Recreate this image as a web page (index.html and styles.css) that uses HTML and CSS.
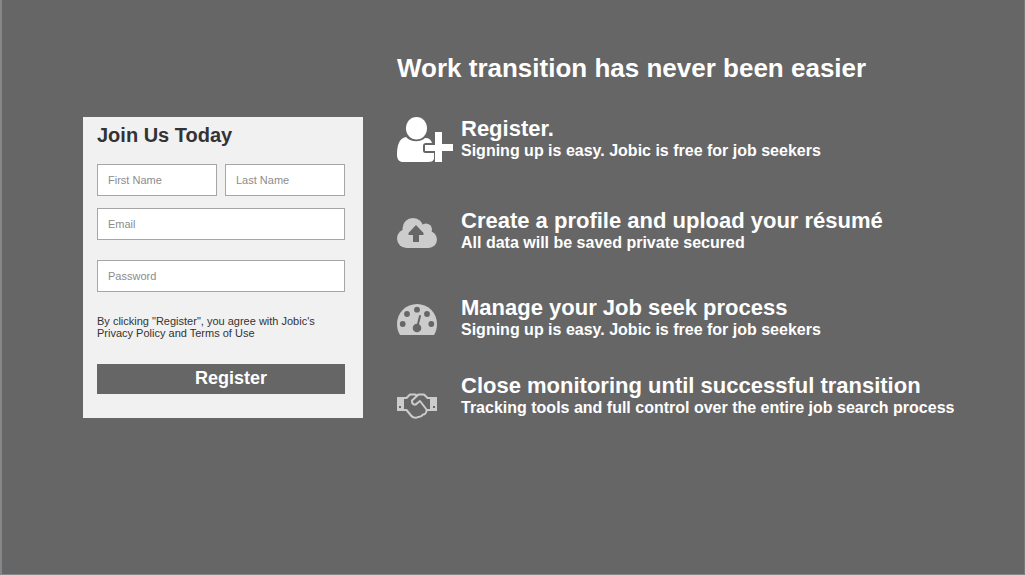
FILE: index.html
```html
<!DOCTYPE html>
<html lang="en">
<head>
<meta charset="utf-8">
<meta name="viewport" content="width=device-width, initial-scale=1">
<title>Join Jobic</title>
<link rel="stylesheet" href="styles.css">
</head>
<body>
<main class="page">
  <form class="signup">
    <h2 class="signup-title">Join Us Today</h2>
    <div class="name-row">
      <input class="field" type="text" placeholder="First Name" aria-label="First Name">
      <input class="field" type="text" placeholder="Last Name" aria-label="Last Name">
    </div>
    <input class="field email" type="email" placeholder="Email" aria-label="Email">
    <input class="field password" type="password" placeholder="Password" aria-label="Password">
    <p class="terms">By clicking "Register", you agree with Jobic's Privacy Policy and Terms of Use</p>
    <button class="submit" type="submit">Register</button>
  </form>
  <section class="intro">
    <h1 class="intro-title">Work transition has never been easier</h1>
    <ul class="steps">
      <li class="step">
        <div class="step-icon">
          <svg class="icon-user" width="56" height="45" viewBox="0 0 56 45" aria-hidden="true">
            <ellipse cx="19.5" cy="11.3" rx="10.5" ry="11.3"/>
            <path d="M9 20C2 21 0 29 0 38C0 42.500 2.500 45 6 45H31C34 45 36 44.400 37 42V36H28.500Q26 36 26 33.500V29Q26 26 29 26H35C34 22 31 20.600 28 21C23 25.500 14 25.500 9 20Z"/>
            <path d="M38 15H45V27H56V34H45V45H38V34H28V28H38Z"/>
          </svg>
        </div>
        <div>
          <h3 class="step-title">Register.</h3>
          <p class="step-text">Signing up is easy. Jobic is free for job seekers</p>
        </div>
      </li>
      <li class="step step-upload">
        <div class="step-icon">
          <svg class="icon-muted" width="40" height="31" viewBox="0 0 40 31" aria-hidden="true">
            <circle cx="9.500" cy="21.500" r="9.500"/>
            <circle cx="16" cy="11.500" r="10.500"/>
            <circle cx="29" cy="12.500" r="6"/>
            <circle cx="31.500" cy="22.500" r="8.500"/>
            <rect x="9.500" y="12" width="22" height="19"/>
            <path class="icon-arrow" d="M19 8L11.500 16V18H16V25H22V18H26.500V16Z"/>
          </svg>
        </div>
        <div>
          <h3 class="step-title">Create a profile and upload your résumé</h3>
          <p class="step-text">All data will be saved private secured</p>
        </div>
      </li>
      <li class="step step-manage">
        <div class="step-icon">
          <svg class="icon-muted" width="40" height="31" viewBox="0 0 40 31" aria-hidden="true">
            <path d="M3 31C1 28 0 24 0 20A20 20 0 0 1 40 20C40 24 39 28 37 31Z"/>
            <g class="icon-cut">
              <circle cx="5.700" cy="20" r="2.900"/>
              <circle cx="10" cy="10" r="2.900"/>
              <circle cx="20" cy="5.700" r="2.900"/>
              <circle cx="30" cy="10" r="2.900"/>
              <circle cx="34.300" cy="20" r="2.900"/>
              <circle cx="20" cy="24" r="4.300"/>
            </g>
            <path class="icon-needle" d="M20 24L23 12"/>
          </svg>
        </div>
        <div>
          <h3 class="step-title">Manage your Job seek process</h3>
          <p class="step-text">Signing up is easy. Jobic is free for job seekers</p>
        </div>
      </li>
      <li class="step step-monitor">
        <div class="step-icon">
          <svg class="icon-muted" width="40" height="26" viewBox="0 0 40 26" aria-hidden="true">
            <path fill-rule="evenodd" d="M0 4H7V18H0ZM2 13V15H4V13Z"/>
            <path fill-rule="evenodd" d="M33 4H40V18H33ZM36 13V15H38V13Z"/>
            <path class="icon-line" d="M7 5H9.500L13 1.500H18L20 2.500M7 17H9.500L14 22.500C16 25 19 25.200 21 24C23 24.200 25 23 26 21.500C28 21.500 29.500 19.500 29.500 17.500L30.500 17H33M33 5H30.500L27 1.500H21.500L15 7.500C14.500 11.500 18 13 20.500 10L23 8L29.500 16.500"/>
          </svg>
        </div>
        <div>
          <h3 class="step-title">Close monitoring until successful transition</h3>
          <p class="step-text">Tracking tools and full control over the entire job search process</p>
        </div>
      </li>
    </ul>
  </section>
</main>
</body>
</html>
```
FILE: styles.css
```css
* {
  box-sizing: border-box;
}

body {
  margin: 0;
  background: #666;
  color: #fff;
  font-family: "Liberation Sans", Arial, sans-serif;
}

h1, h2, h3, p, ul {
  margin: 0;
  padding: 0;
}

.page {
  display: flex;
  align-items: flex-start;
  gap: 34px;
  min-height: 100vh;
  padding: 52px 32px 52px 81px;
  border-left: 2px solid #85888b;
  border-right: 1px solid #77797b;
  border-bottom: 1px solid #85888b;
}

.signup {
  flex: 0 0 280px;
  margin-top: 65px;
  padding: 6px 18px 24px 14px;
  background: #f1f1f1;
  color: #333;
}

.signup-title {
  margin-bottom: 17px;
  font-size: 20px;
  line-height: 24px;
}

.name-row {
  display: flex;
  gap: 8px;
}

.field {
  display: block;
  width: 100%;
  min-width: 0;
  height: 32px;
  padding: 0 10px;
  border: 1px solid #a6a6a6;
  border-radius: 0;
  background: #fff;
  color: #333;
  font-family: inherit;
  font-size: 11px;
}

.field::placeholder {
  color: #8c8c8c;
  opacity: 1;
}

.email {
  margin-top: 12px;
}

.password {
  margin-top: 20px;
}

.terms {
  margin: 23px 0 25px;
  font-size: 11px;
  line-height: 12px;
}

.submit {
  display: block;
  width: 100%;
  height: 30px;
  padding: 0 0 2px 20px;
  border: 0;
  background: #666;
  color: #fff;
  font-family: inherit;
  font-size: 18px;
  font-weight: bold;
}

.intro {
  flex: 1;
}

.intro-title {
  font-size: 26px;
  line-height: 32px;
}

.steps {
  margin-top: 33px;
  list-style: none;
}

.step {
  display: flex;
  align-items: flex-end;
}

.step-upload {
  align-items: center;
  margin-top: 48px;
}

.step-manage {
  align-items: center;
  margin-top: 43px;
}

.step-monitor {
  margin-top: 34px;
}

.step-icon {
  display: flex;
  flex: 0 0 64px;
}

.step-title {
  font-size: 22px;
  line-height: 22px;
}

.step-text {
  font-size: 16px;
  font-weight: bold;
  line-height: 22px;
}

.icon-user {
  fill: #fff;
}

.icon-muted {
  fill: #ccc;
}

.icon-cut,
.icon-arrow {
  fill: #666;
}

.icon-needle {
  fill: none;
  stroke: #666;
  stroke-width: 2;
  stroke-linecap: round;
}

.icon-line {
  fill: none;
  stroke: #ccc;
  stroke-width: 2;
  stroke-linejoin: round;
}
```
